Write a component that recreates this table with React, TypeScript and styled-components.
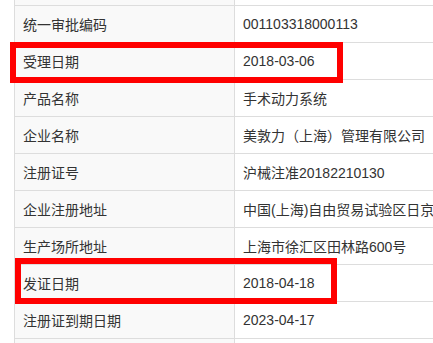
import styled, { createGlobalStyle } from "styled-components";

const rows: [string, string][] = [
  ["", ""],
  ["统一审批编码", "001103318000113"],
  ["受理日期", "2018-03-06"],
  ["产品名称", "手术动力系统"],
  ["企业名称", "美敦力（上海）管理有限公司"],
  ["注册证号", "沪械注准20182210130"],
  ["企业注册地址", "中国(上海)自由贸易试验区日京路68号"],
  ["生产场所地址", "上海市徐汇区田林路600号"],
  ["发证日期", "2018-04-18"],
  ["注册证到期日期", "2023-04-17"],
  ["", ""],
];

const App = () => {
  return (
    <Page>
      <GlobalStyle />
      <Table>
        {rows.map(([label, value], i) => (
          <Row key={i}>
            <Label>{label}</Label>
            <Value>{value}</Value>
          </Row>
        ))}
      </Table>
      <Highlight $top={42} $left={10} $width={333} $height={41} />
      <Highlight $top={258} $left={15} $width={322} $height={46} />
    </Page>
  );
};

const GlobalStyle = createGlobalStyle`
  html, body {
    margin: 0;
    background: #ffffff;
    overflow: hidden;
  }
`;

const Page = styled.div`
  position: relative;
  width: 433px;
  height: 343px;
  overflow: hidden;
  padding-left: 14px;
  box-sizing: border-box;
  font-family: "Liberation Sans", "Noto Sans CJK SC", sans-serif;
  font-size: 14px;
  color: #333333;
`;

const Table = styled.div`
  width: 560px;
  margin-top: -32px;
  border-left: 1px solid #dddddd;
`;

const Row = styled.div`
  display: grid;
  grid-template-columns: 220px 1fr;
  height: 36px;
  border-top: 1px solid #dddddd;
`;

const Label = styled.div`
  display: flex;
  align-items: center;
  padding-left: 8px;
  background: #f9f9f9;
  border-right: 1px solid #dddddd;
  white-space: nowrap;
`;

const Value = styled.div`
  display: flex;
  align-items: center;
  padding-left: 8px;
  white-space: nowrap;
`;

const Highlight = styled.div<{ $top: number; $left: number; $width: number; $height: number }>`
  position: absolute;
  top: ${(p) => p.$top}px;
  left: ${(p) => p.$left}px;
  width: ${(p) => p.$width}px;
  height: ${(p) => p.$height}px;
  border: 6px solid #ff0000;
  box-sizing: border-box;
`;

export default App;
